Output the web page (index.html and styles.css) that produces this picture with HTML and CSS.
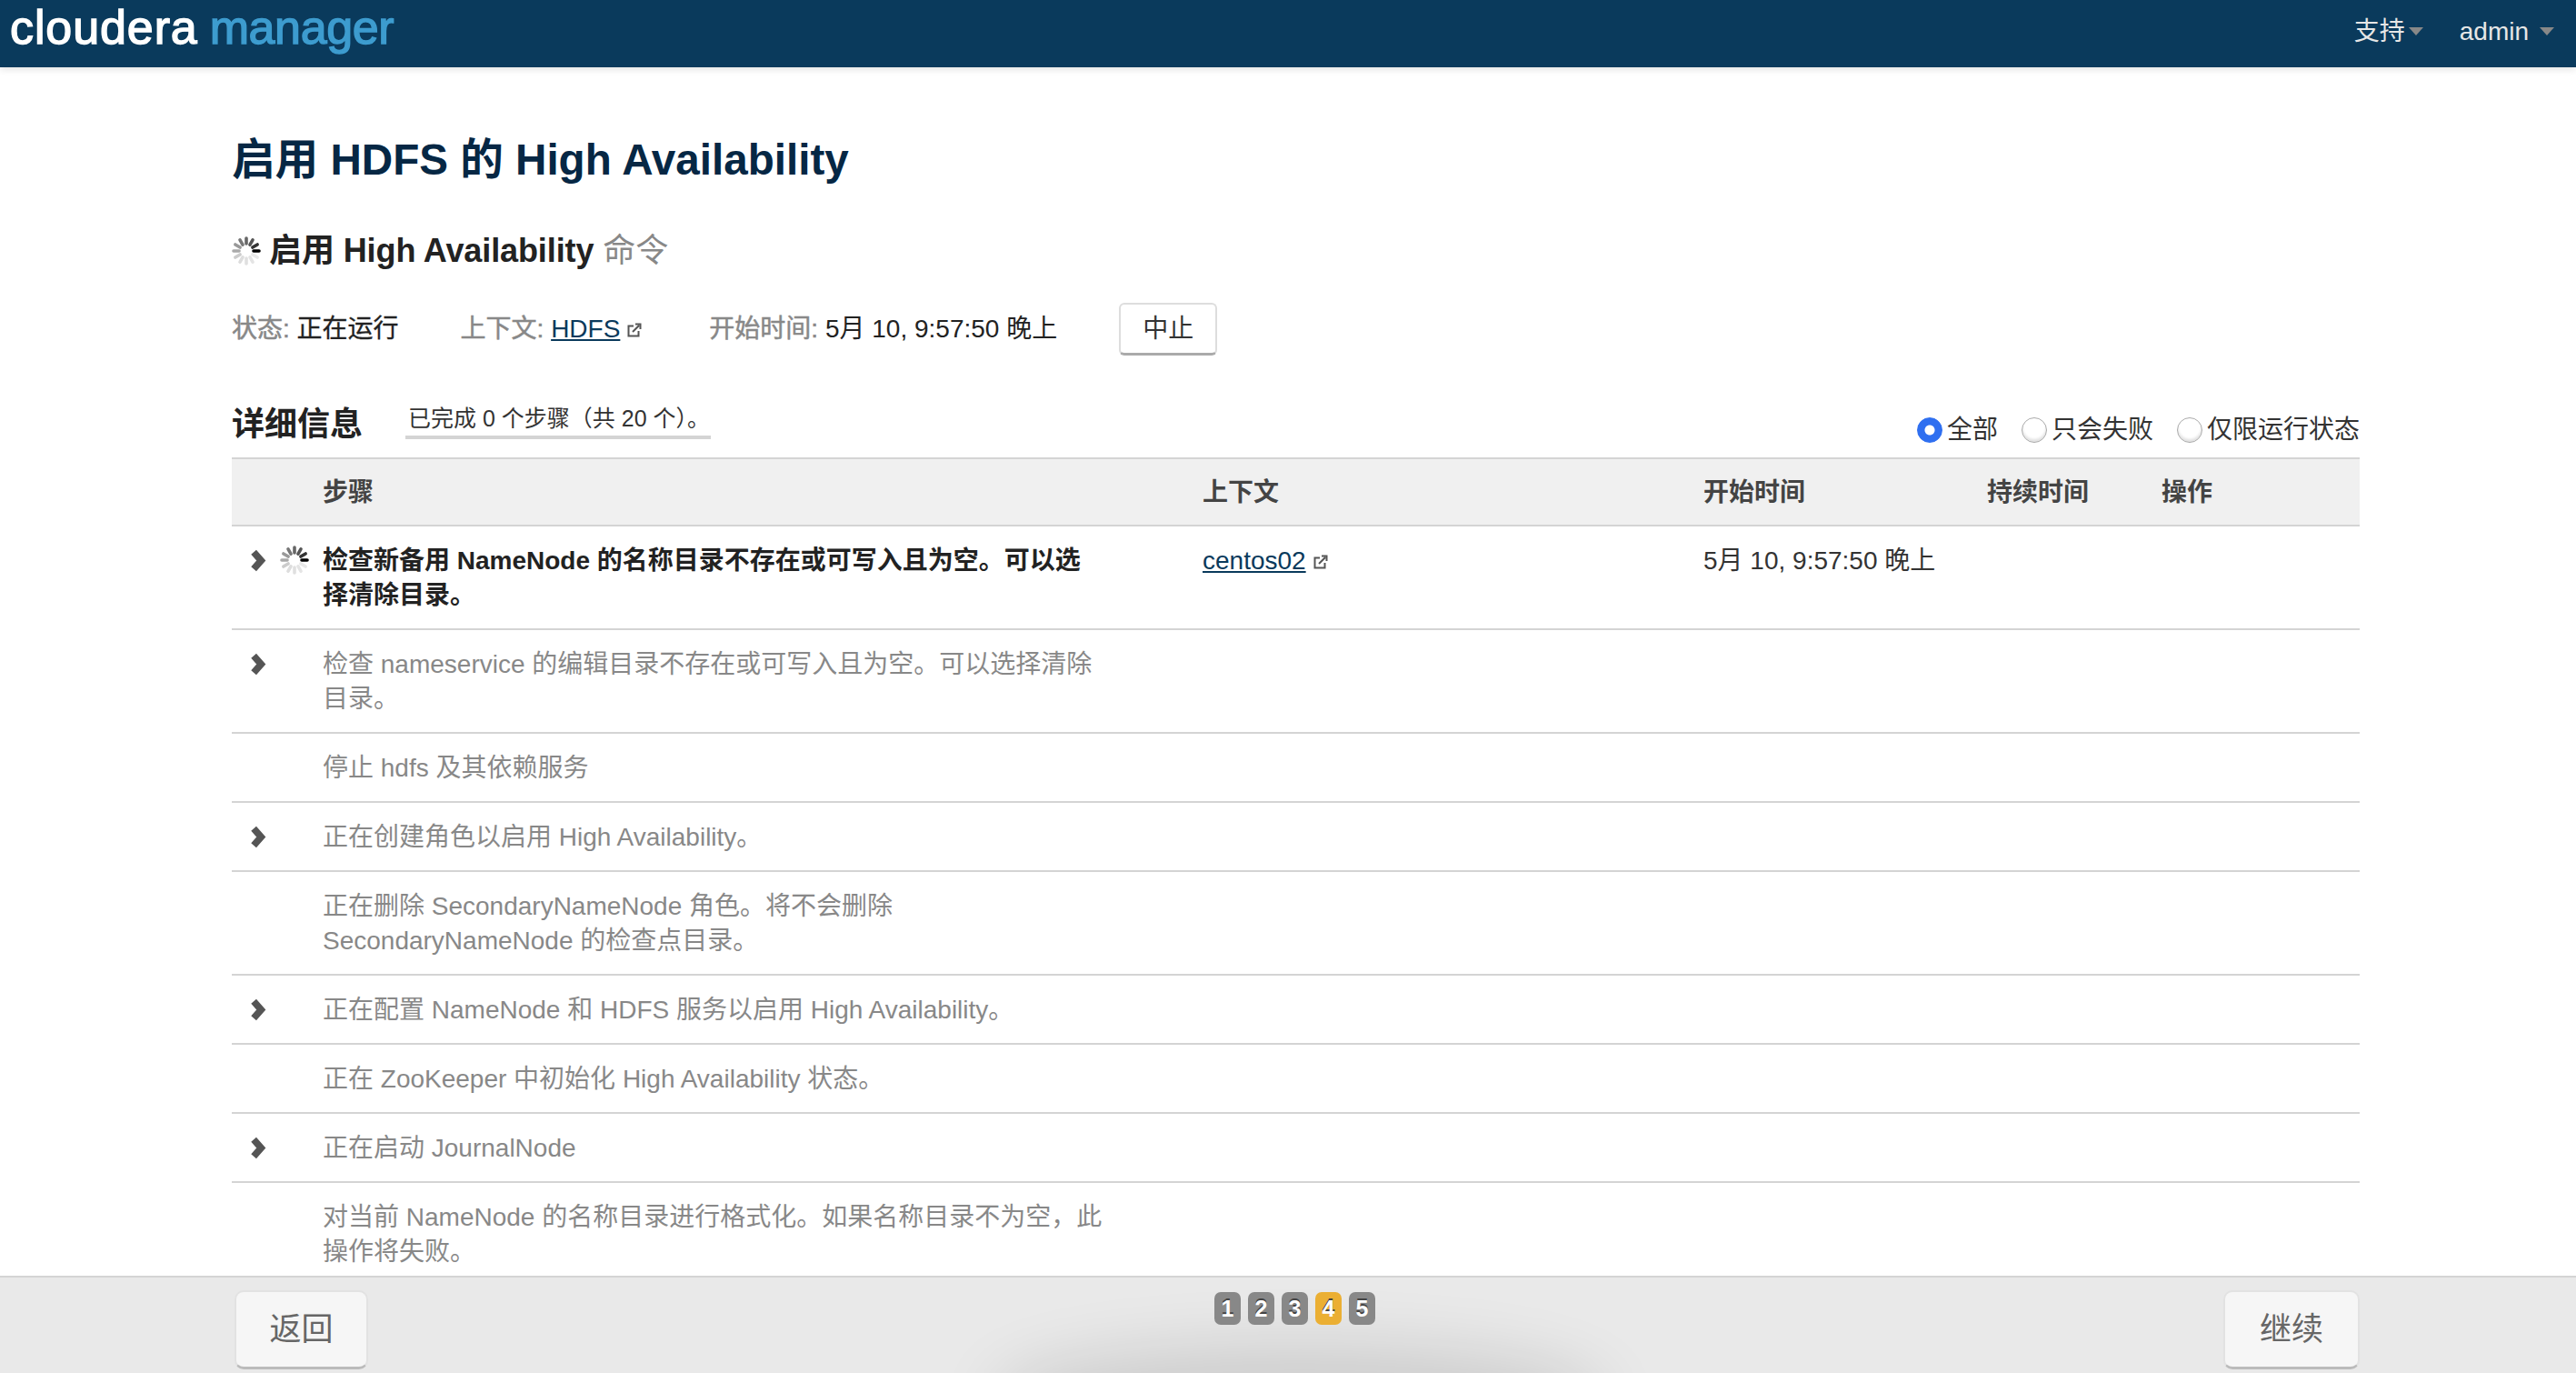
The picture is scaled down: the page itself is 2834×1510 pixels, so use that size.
FILE: index.html
```html
<!DOCTYPE html>
<html lang="zh-CN">
<head>
    <meta charset="UTF-8">
    <title>启用 HDFS 的 High Availability</title>
    <link rel="stylesheet" href="styles.css">
</head>
<body>
    <svg class="defs" width="0" height="0">
        <symbol id="spin" viewBox="0 0 32 32">
            <g stroke-width="3.6" stroke-linecap="round">
                <line x1="24" y1="16" x2="30" y2="16" stroke="#000"/>
                <line x1="24" y1="16" x2="30" y2="16" stroke="#333" transform="rotate(-30 16 16)"/>
                <line x1="24" y1="16" x2="30" y2="16" stroke="#555" transform="rotate(-60 16 16)"/>
                <line x1="24" y1="16" x2="30" y2="16" stroke="#666" transform="rotate(-90 16 16)"/>
                <line x1="24" y1="16" x2="30" y2="16" stroke="#777" transform="rotate(-120 16 16)"/>
                <line x1="24" y1="16" x2="30" y2="16" stroke="#999" transform="rotate(-150 16 16)"/>
                <line x1="24" y1="16" x2="30" y2="16" stroke="#aaa" transform="rotate(180 16 16)"/>
                <line x1="24" y1="16" x2="30" y2="16" stroke="#ccc" transform="rotate(150 16 16)"/>
                <line x1="24" y1="16" x2="30" y2="16" stroke="#ddd" transform="rotate(120 16 16)"/>
                <line x1="24" y1="16" x2="30" y2="16" stroke="#e0e0e0" transform="rotate(90 16 16)"/>
                <line x1="24" y1="16" x2="30" y2="16" stroke="#e4e4e4" transform="rotate(60 16 16)"/>
                <line x1="24" y1="16" x2="30" y2="16" stroke="#e8e8e8" transform="rotate(30 16 16)"/>
            </g>
        </symbol>
        <symbol id="chev" viewBox="0 0 16 23">
            <path d="M3.5 3 L11 11.5 L3.5 20" fill="none" stroke="#555" stroke-width="7"/>
        </symbol>
        <symbol id="ext" viewBox="0 0 16 16">
            <path d="M7 3.5 H1.5 V14.5 H12.5 V9" fill="none" stroke="#555" stroke-width="2"/>
            <path d="M6 10 L13 3 M9 1.5 H14.5 V7" fill="none" stroke="#555" stroke-width="2"/>
        </symbol>
    </svg>

    <header class="topbar">
        <div class="logo"><span class="logo-a">cloudera</span><span class="logo-b">manager</span></div>
        <nav class="topnav">
            <a class="nav-support">支持<i class="caret"></i></a>
            <a class="nav-admin">admin<i class="caret"></i></a>
        </nav>
    </header>

    <main class="content">
        <h1 class="title">启用 HDFS 的 High Availability</h1>
        <h2 class="subtitle">
            <svg class="spinner"><use href="#spin"/></svg>
            <span>启用 High Availability <span class="muted">命令</span></span>
        </h2>

        <div class="info">
            <span class="info-status"><b>状态:</b> 正在运行</span>
            <span class="info-context"><b>上下文:</b> <a class="link" href="#">HDFS</a><svg class="ext"><use href="#ext"/></svg></span>
            <span class="info-start"><b>开始时间:</b> 5月 10, 9:57:50 晚上</span>
            <button class="btn-abort">中止</button>
        </div>

        <div class="details-head">
            <h3 class="details-title">详细信息</h3>
            <div class="progress">已完成 0 个步骤（共 20 个）。</div>
            <form class="filters">
                <label class="filter"><input type="radio" name="f" checked>全部</label>
                <label class="filter"><input type="radio" name="f">只会失败</label>
                <label class="filter"><input type="radio" name="f">仅限运行状态</label>
            </form>
        </div>

        <table class="steps">
            <thead>
                <tr>
                    <th class="col-icons"></th>
                    <th class="col-step">步骤</th>
                    <th class="col-context">上下文</th>
                    <th class="col-start">开始时间</th>
                    <th class="col-duration">持续时间</th>
                    <th class="col-actions">操作</th>
                </tr>
            </thead>
            <tbody>
                <tr class="running">
                    <td><div class="icons"><svg class="chevron"><use href="#chev"/></svg><svg class="spinner"><use href="#spin"/></svg></div></td>
                    <td class="step">检查新备用 NameNode 的名称目录不存在或可写入且为空。可以选择清除目录。</td>
                    <td><a class="link" href="#">centos02</a><svg class="ext"><use href="#ext"/></svg></td>
                    <td>5月 10, 9:57:50 晚上</td>
                    <td></td>
                    <td></td>
                </tr>
                <tr>
                    <td><div class="icons"><svg class="chevron"><use href="#chev"/></svg></div></td>
                    <td class="step">检查 nameservice 的编辑目录不存在或可写入且为空。可以选择清除目录。</td>
                    <td></td><td></td><td></td><td></td>
                </tr>
                <tr>
                    <td></td>
                    <td class="step">停止 hdfs 及其依赖服务</td>
                    <td></td><td></td><td></td><td></td>
                </tr>
                <tr>
                    <td><div class="icons"><svg class="chevron"><use href="#chev"/></svg></div></td>
                    <td class="step">正在创建角色以启用 High Availability。</td>
                    <td></td><td></td><td></td><td></td>
                </tr>
                <tr>
                    <td></td>
                    <td class="step">正在删除 SecondaryNameNode 角色。将不会删除 SecondaryNameNode 的检查点目录。</td>
                    <td></td><td></td><td></td><td></td>
                </tr>
                <tr>
                    <td><div class="icons"><svg class="chevron"><use href="#chev"/></svg></div></td>
                    <td class="step">正在配置 NameNode 和 HDFS 服务以启用 High Availability。</td>
                    <td></td><td></td><td></td><td></td>
                </tr>
                <tr>
                    <td></td>
                    <td class="step">正在 ZooKeeper 中初始化 High Availability 状态。</td>
                    <td></td><td></td><td></td><td></td>
                </tr>
                <tr>
                    <td><div class="icons"><svg class="chevron"><use href="#chev"/></svg></div></td>
                    <td class="step">正在启动 JournalNode</td>
                    <td></td><td></td><td></td><td></td>
                </tr>
                <tr>
                    <td></td>
                    <td class="step">对当前 NameNode 的名称目录进行格式化。如果名称目录不为空，此操作将失败。</td>
                    <td></td><td></td><td></td><td></td>
                </tr>
            </tbody>
        </table>
    </main>

    <footer class="wizard">
        <button class="btn-wizard">返回</button>
        <div class="pages">
            <span class="page">1</span>
            <span class="page">2</span>
            <span class="page">3</span>
            <span class="page current">4</span>
            <span class="page">5</span>
        </div>
        <button class="btn-wizard btn-next">继续</button>
    </footer>
</body>
</html>
```

FILE: styles.css
```css
* { box-sizing: border-box; }
html, body { height: 100%; }
body { margin: 0; display: flex; flex-direction: column; overflow: hidden; background: #fff; color: #333; font-family: "Liberation Sans", "Noto Sans CJK SC", sans-serif; font-size: 28px; line-height: 38px; }
.defs { position: absolute; }
a { text-decoration: none; }

.topbar { flex: none; height: 74px; display: flex; justify-content: space-between; background: #0a3a5c; box-shadow: 0 2px 8px rgba(0,0,0,.12); position: relative; z-index: 2; }
.logo { padding: 0 0 0 11px; font-size: 52px; line-height: 60px; font-weight: 400; -webkit-text-stroke: 1.4px currentColor; }
.logo-a { color: #fff; letter-spacing: .9px; margin-right: 13px; }
.logo-b { color: #3d9ccf; letter-spacing: -.4px; }
.topnav { display: flex; padding: 17px 24px 0 0; line-height: 36px; color: #e6e6e6; }
.nav-support { margin-right: 40px; }
.caret { display: inline-block; width: 0; height: 0; margin-left: 4px; border-left: 8px solid transparent; border-right: 8px solid transparent; border-top: 9px solid #888; vertical-align: 5px; }
.nav-admin .caret { margin-left: 12px; }

.content { flex: 1; min-height: 0; overflow: hidden; padding: 0 238px 0 255px; }
.title { margin: 71px 0 0; font-size: 47.6px; line-height: 62px; font-weight: 700; color: #062744; }
.subtitle { display: flex; align-items: center; gap: 9px; margin: 45px 0 0; font-size: 36px; line-height: 48px; font-weight: 700; letter-spacing: -.1px; color: #222; }
.muted { color: #888; font-weight: 400; }
.spinner { width: 32px; height: 32px; flex: none; }

.info { display: flex; align-items: center; gap: 68px; margin-top: 33px; height: 58px; color: #222; }
.info b { color: #888; font-weight: 400; -webkit-text-stroke: .5px #888; }
.info-status { -webkit-text-stroke: .3px #222; }
.info-start { margin-left: 6px; }
.link { color: #0a3a5c; text-decoration: underline; }
.ext { width: 16px; height: 16px; margin-left: 8px; }
.btn-abort { width: 108px; height: 58px; padding: 0; border: 2px solid #ddd; border-bottom: 3px solid #aaa; border-radius: 6px; background: #fff; color: #333; font: inherit; }

.details-head { display: flex; align-items: flex-start; height: 60px; margin-top: 52px; }
.details-title { margin: 0; font-size: 36px; line-height: 48px; font-weight: 700; color: #222; }
.progress { width: 336px; margin: 2px 0 0 47px; height: 38px; padding: 0 3px; border-bottom: 4px solid #d4d4d4; font-size: 25px; line-height: 30px; white-space: nowrap; }
.filters { display: flex; gap: 26px; margin: 11px 0 0 auto; color: #333; }
.filter { display: flex; align-items: center; gap: 5px; }
.filter input { appearance: none; -webkit-appearance: none; width: 28px; height: 28px; margin: 0; border: 1px solid #aaa; border-radius: 50%; background: #fff; box-shadow: inset 0 -3px 3px rgba(0,0,0,.12); }
.filter input:checked { border-color: #2f6ff0; background: radial-gradient(circle, #fff 0 5px, #2f6ff0 6px); box-shadow: none; }

.steps { width: 2341px; table-layout: fixed; border-collapse: collapse; }
.steps th { height: 74px; padding: 2px 0 0; border-top: 2px solid #d4d4d4; border-bottom: 2px solid #d4d4d4; background: #f0f0f0; color: #444; text-align: left; font-weight: 700; }
.steps td { padding: 19px 0 17px; border-bottom: 2px solid #d4d4d4; vertical-align: top; color: #888; }
.col-icons { width: 100px; }
.col-step { width: 968px; }
.col-context { width: 551px; }
.col-start { width: 312px; }
.col-duration { width: 192px; }
.col-actions { width: 218px; }
.steps td.step { padding-right: 108px; }
.icons { display: flex; gap: 15px; padding: 6px 0 0 20px; }
.chevron { width: 18px; height: 25px; flex: none; }
.icons .spinner { margin-top: -4px; }
.steps .running td { color: #333; }
.steps .running td.step { color: #222; font-weight: 700; }

.wizard { flex: none; height: 107px; position: relative; overflow: hidden; display: flex; justify-content: space-between; align-items: flex-start; padding: 14px 238px 0 258px; border-top: 2px solid #d4d4d4; background: #e9e9e9; }
.wizard::after { content: ""; position: absolute; left: 1120px; bottom: -60px; width: 620px; height: 60px; border-radius: 50%; box-shadow: 0 0 70px 30px rgba(0,0,0,.12); }
.btn-wizard { width: 147px; height: 87px; padding: 0; border: 2px solid #e2e2e2; border-bottom: 3px solid #bbb; border-radius: 10px; background: #f6f6f6; color: #666; font: inherit; font-size: 35px; }
.btn-next { width: 150px; }
.pages { display: flex; gap: 8px; margin: 2px 0 0 -2px; position: relative; z-index: 1; }
.page { width: 29px; height: 36px; border-radius: 7px; background: #888; color: #fff; font-size: 25px; line-height: 36px; font-weight: 700; text-align: center; text-shadow: 0 -2px 0 #444; }
.page.current { background: #ebaf33; }
```
